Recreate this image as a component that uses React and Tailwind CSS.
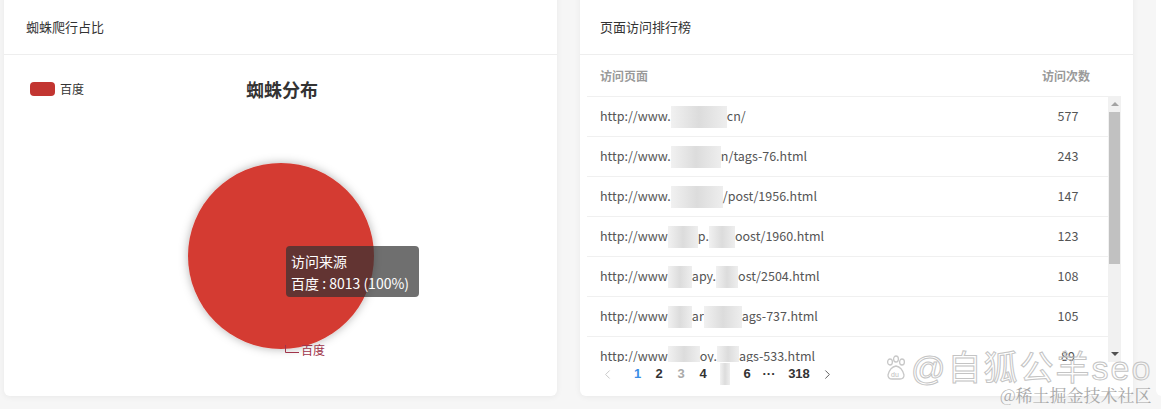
import React from "react";
import { ChevronLeft, ChevronRight } from "lucide-react";

const rows = [
  { a: "http://www.", b: [56], c: "cn/", n: 577 },
  { a: "http://www.", b: [50], c: "n/tags-76.html", n: 243 },
  { a: "http://www.", b: [52], c: "/post/1956.html", n: 147 },
  { a: "http://www", b: [30], mid: "p.", b2: [26], c: "oost/1960.html", n: 123 },
  { a: "http://www", b: [24], mid: "apy.", b2: [22], c: "ost/2504.html", n: 108 },
  { a: "http://www", b: [24], mid: "ar", b2: [38], c: "ags-737.html", n: 105 },
  { a: "http://www", b: [32], mid: "oy.", b2: [22], c: "ags-533.html", n: 89 },
];

function Blur({ w }) {
  return (
    <span
      className="inline-block h-[22px] align-middle bg-gradient-to-r from-[#f1f1f1] via-[#dcdcdc] to-[#eeeeee]"
      style={{ width: w }}
    />
  );
}

export default function App() {
  return (
    <div className="w-[1161px] h-[409px] overflow-hidden bg-[#f6f6f6] relative font-['Noto_Sans_CJK_SC','Liberation_Sans',sans-serif]">
      <div className="flex gap-[23px] pl-[4px] -mt-[10px]">
        {/* Left card */}
        <div className="w-[553px] h-[406px] bg-white rounded-md shadow-[0_1px_6px_rgba(0,0,0,0.06)] flex flex-col shrink-0">
          <div className="h-[65px] pt-[10px] border-b border-[#eeeeee] flex items-center px-[22px] text-[13px] text-[#333]">
            蜘蛛爬行占比
          </div>
          <div className="relative flex-1">
            <div className="absolute left-[26px] top-[25px] flex items-center gap-[5px]">
              <span className="w-[25px] h-[14px] rounded-[4px] bg-[#c23531]" />
              <span className="text-[12px] text-[#333]">百度</span>
            </div>
            <div className="absolute left-[242px] top-[21px] text-[18px] font-bold text-[#333]">
              蜘蛛分布
            </div>
            <svg
              className="absolute left-[166px] top-[85px]"
              width="230"
              height="230"
              viewBox="0 0 230 230"
            >
              <defs>
                <filter id="sh" x="-20%" y="-20%" width="140%" height="140%">
                  <feDropShadow dx="0" dy="0" stdDeviation="5" floodColor="#000" floodOpacity="0.3" />
                </filter>
              </defs>
              <circle cx="111" cy="116" r="93" fill="#d43a31" filter="url(#sh)" />
              <path d="M115.5 205 V212.5 H129" fill="none" stroke="#a0344a" strokeWidth="1" />
            </svg>
            <div className="absolute left-[297px] top-[289px] text-[12px] text-[#a0344a] leading-none">
              百度
            </div>
            <div className="absolute left-[282px] top-[191px] w-[133px] h-[51px] rounded-[4px] bg-[rgba(50,50,50,0.7)] text-white text-[14px] leading-[22px] px-[5px] pt-[4px]">
              <div>访问来源</div>
              <div className="whitespace-nowrap">百度 : 8013 (100%)</div>
            </div>
          </div>
        </div>

        {/* Right card */}
        <div className="w-[553px] h-[406px] bg-white rounded-md shadow-[0_1px_6px_rgba(0,0,0,0.06)] flex flex-col shrink-0">
          <div className="h-[65px] pt-[10px] border-b border-[#eeeeee] flex items-center px-[20px] text-[13px] text-[#333]">
            页面访问排行榜
          </div>
          <div className="flex items-center h-[41px] pl-[20px] pr-[43px] text-[12px] font-semibold text-[#9a9a9a] justify-between">
            <span>访问页面</span>
            <span>访问次数</span>
          </div>
          <div className="flex pl-[7px] pr-[12px]">
            <div className="flex-1 h-[266px] overflow-hidden">
              {rows.map((r, i) => (
                <div
                  key={i}
                  className="h-[40px] flex items-center border-t border-[#f0f0f0] pl-[13px] text-[12.5px] text-[#555]"
                >
                  <div className="flex-1 flex items-center whitespace-nowrap">
                    <span>{r.a}</span>
                    <Blur w={r.b[0]} />
                    {r.mid && <span>{r.mid}</span>}
                    {r.b2 && <Blur w={r.b2[0]} />}
                    <span>{r.c}</span>
                  </div>
                  <div className="w-[70px] text-center pr-[10px]">{r.n}</div>
                </div>
              ))}
            </div>
            <div className="w-[13px] h-[266px] bg-[#f1f1f1] flex flex-col items-center">
              <div className="h-[16px] flex items-center justify-center">
                <span className="w-0 h-0 border-l-[4px] border-r-[4px] border-b-[4px] border-l-transparent border-r-transparent border-b-[#a3a3a3]" />
              </div>
              <div className="w-[11px] h-[152px] bg-[#c1c1c1]" />
              <div className="flex-1" />
              <div className="h-[16px] flex items-center justify-center">
                <span className="w-0 h-0 border-l-[4px] border-r-[4px] border-t-[4px] border-l-transparent border-r-transparent border-t-[#505050]" />
              </div>
            </div>
          </div>
          <div className="flex items-center h-[20px] mt-[2px] pl-[20px] text-[13px] font-bold text-[#333] font-['Liberation_Sans',sans-serif]">
            <span className="w-[27px] flex justify-start text-[#c5c5c5]"><ChevronLeft size={15} strokeWidth={1.5} /></span>
            <span className="w-[21px] text-center text-[#3a8ee6]">1</span>
            <span className="w-[22px] text-center">2</span>
            <span className="w-[22px] text-center text-[#aaa]">3</span>
            <span className="w-[22px] text-center">4</span>
            <span className="w-[22px] flex justify-center"><Blur w={10} /></span>
            <span className="w-[22px] text-center">6</span>
            <span className="w-[22px] text-center">···</span>
            <span className="w-[38px] text-center">318</span>
            <span className="w-[18px] flex justify-center text-[#555]"><ChevronRight size={15} strokeWidth={1.5} /></span>
          </div>
        </div>

        {/* Partial third card */}
        <div className="w-[40px] h-[406px] bg-white rounded-md shrink-0" />
      </div>

      {/* Watermark */}
      <div className="absolute left-[884px] top-[351px] flex items-center gap-[3px]">
        <svg width="24" height="26" viewBox="0 0 24 26">
          <g fill="none" stroke="#c8c8c8" strokeWidth="1.3">
            <ellipse cx="6" cy="7" rx="2.4" ry="3" />
            <ellipse cx="12" cy="4" rx="2.4" ry="3" />
            <ellipse cx="18" cy="7" rx="2.4" ry="3" />
            <path d="M4 20 Q6 12 12 11 Q18 12 20 20 Q20 24 16 24 L8 24 Q4 24 4 20 Z" />
          </g>
          <text x="7" y="22" fontSize="7" fill="#bdbdbd" fontFamily="Liberation Sans">du</text>
        </svg>
        <span className="text-[34px] tracking-[2px] leading-none text-transparent [-webkit-text-stroke:1px_#c4c4c4] font-['Liberation_Sans','Noto_Sans_CJK_SC',sans-serif] whitespace-nowrap">
          @自狐公羊seo
        </span>
      </div>
      <div className="absolute left-[1000px] top-[386px] text-[17px] leading-none text-[#a8a8a8] font-['Noto_Serif_CJK_SC','Noto_Sans_CJK_SC',serif] whitespace-nowrap">
        @稀土掘金技术社区
      </div>
    </div>
  );
}
